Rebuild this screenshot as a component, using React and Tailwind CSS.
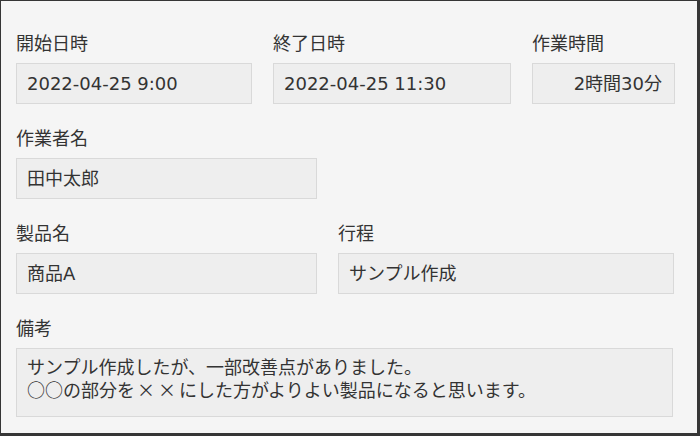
import React from "react";

const Field = ({ label, value, className = "", align = "left", boxClassName = "h-[41px]" }) => (
  <div className={className}>
    <div className="h-6 leading-6 mb-[7px] text-[18px] text-[#333333]">{label}</div>
    <div
      className={`${boxClassName} border border-[#d9d9d9] bg-[#eeeeee] text-[18px] text-[#333333] flex items-center ${
        align === "right" ? "justify-end pr-[12px]" : "pl-[10px]"
      }`}
    >
      {value}
    </div>
  </div>
);

const App = () => {
  return (
    <div
      className="w-[700px] h-[436px] bg-[#f5f5f5] border-[#363636] border-t border-l border-r-[3px] border-b-[3px] pt-[31px] pl-[15px] flex flex-col gap-[23px]"
      style={{ fontFamily: '"DejaVu Sans", "Noto Sans CJK JP", sans-serif' }}
    >
      <div className="grid grid-cols-[236px_238px_143px] gap-x-[21px]">
        <Field label="開始日時" value="2022-04-25 9:00" />
        <Field label="終了日時" value="2022-04-25 11:30" />
        <Field label="作業時間" value="2時間30分" align="right" />
      </div>

      <div className="grid grid-cols-[301px] gap-x-[21px]">
        <Field label="作業者名" value="田中太郎" />
      </div>

      <div className="grid grid-cols-[301px_336px] gap-x-[21px]">
        <Field label="製品名" value="商品A" />
        <Field label="行程" value="サンプル作成" />
      </div>

      <div className="w-[657px]">
        <div className="h-6 leading-6 mb-[7px] text-[18px] text-[#333333]">備考</div>
        <div
          className="h-[69px] border border-[#d9d9d9] bg-[#eeeeee] pl-[10px] pt-[6px] text-[18px] leading-[23px] text-[#333333]"
          style={{ fontFamily: '"Noto Sans CJK JP", sans-serif' }}
        >
          <div>サンプル作成したが、一部改善点がありました。</div>
          <div>○○の部分を<span className="tracking-[3px] pl-[2px]">××</span>にした方がよりよい製品になると思います。</div>
        </div>
      </div>
    </div>
  );
};

export default App;
